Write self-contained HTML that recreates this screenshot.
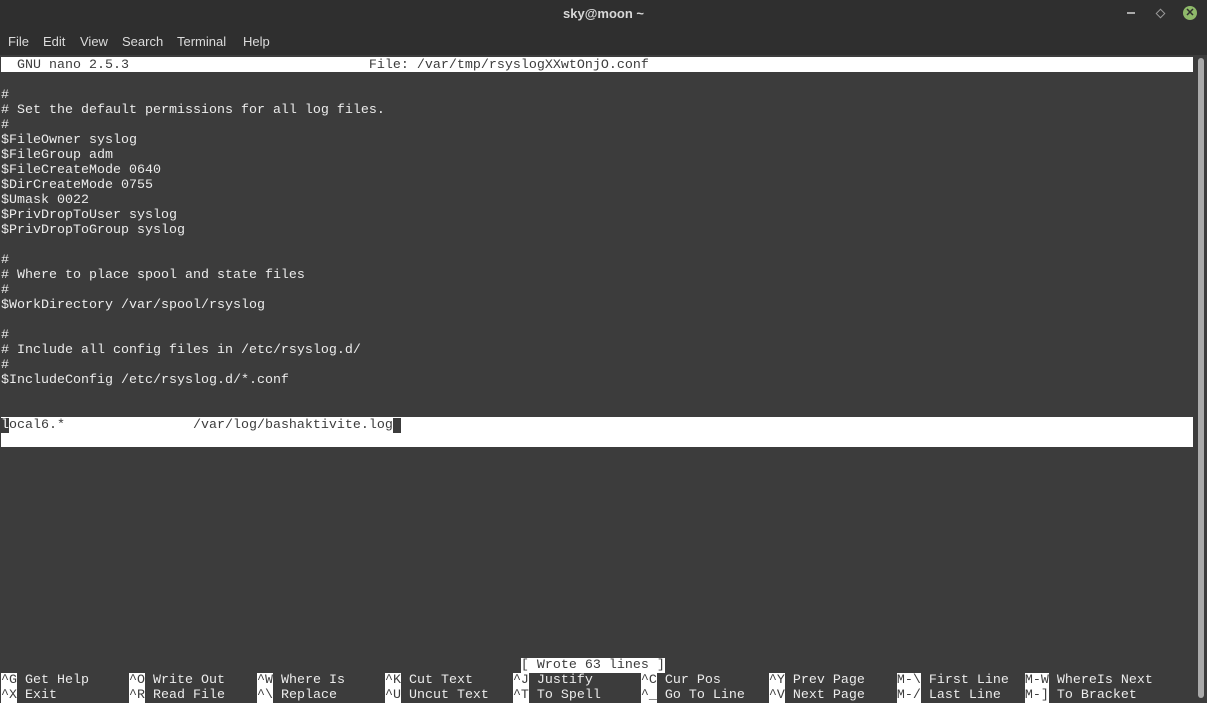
<!DOCTYPE html><html><head><meta charset="utf-8"><style>
*{margin:0;padding:0}
body{width:1207px;height:703px;background:#2f2f2f;overflow:hidden;position:relative;font-family:"Liberation Sans",sans-serif}
#title{position:absolute;top:0;left:0;width:1207px;height:30px;line-height:28px;text-align:center;color:#d8d8d8;font-weight:bold;font-size:13px}
#menu{position:absolute;top:30px;left:0;height:25px;font-size:13px;color:#dcdcdc}
#menu span{position:absolute;top:4px;white-space:nowrap}
#term{position:absolute;top:55px;left:0;width:1207px;height:648px;background:#3c3c3c}
pre{position:absolute;top:3px;left:1px;font-family:"Liberation Mono",monospace;font-size:13.33px;line-height:15px;color:#ececec;white-space:pre}
.i{background:#fff;color:#3c3c3c}
.h{color:#3c3c3c}
.c{background:#3c3c3c;color:#fff}
#hdr{position:absolute;top:2px;left:1px;width:1192px;height:15px;background:#fff}
#hl{position:absolute;top:362px;left:1px;width:1192px;height:30px;background:#fff}
#sb{position:absolute;top:3px;left:1198px;width:6px;height:640px;background:#aaa;border-radius:3px}
</style></head><body>
<div id="title">sky@moon ~</div>
<div style="position:absolute;left:1127px;top:12px;width:8px;height:2px;background:#aaa"></div>
<div style="position:absolute;left:1157px;top:10px;width:5px;height:5px;border:1px solid #999;transform:rotate(45deg)"></div>
<div style="position:absolute;left:1183px;top:6px;width:14px;height:14px;border-radius:7px;background:#8fba6a;color:#2f2f2f;font-size:11px;line-height:14px;text-align:center;font-weight:bold">✕</div>
<div id="menu"><span style="left:8px">File</span><span style="left:43px">Edit</span><span style="left:80px">View</span><span style="left:122px">Search</span><span style="left:177px">Terminal</span><span style="left:243px">Help</span></div>
<div id="term"><div id="hdr"></div><div id="hl"></div><div id="sb"></div>
<pre><span class="h">  GNU nano 2.5.3                              File: /var/tmp/rsyslogXXwtOnjO.conf</span>

#
# Set the default permissions for all log files.
#
$FileOwner syslog
$FileGroup adm
$FileCreateMode 0640
$DirCreateMode 0755
$Umask 0022
$PrivDropToUser syslog
$PrivDropToGroup syslog

#
# Where to place spool and state files
#
$WorkDirectory /var/spool/rsyslog

#
# Include all config files in /etc/rsyslog.d/
#
$IncludeConfig /etc/rsyslog.d/*.conf


<span class="c">l</span><span class="i">ocal6.*                /var/log/bashaktivite.log</span><span class="c"> </span>















                                                                 <span class="i">[ Wrote 63 lines ]</span>
<span class="i">^G</span> Get Help     <span class="i">^O</span> Write Out    <span class="i">^W</span> Where Is     <span class="i">^K</span> Cut Text     <span class="i">^J</span> Justify      <span class="i">^C</span> Cur Pos      <span class="i">^Y</span> Prev Page    <span class="i">M-\</span> First Line  <span class="i">M-W</span> WhereIs Next
<span class="i">^X</span> Exit         <span class="i">^R</span> Read File    <span class="i">^\</span> Replace      <span class="i">^U</span> Uncut Text   <span class="i">^T</span> To Spell     <span class="i">^_</span> Go To Line   <span class="i">^V</span> Next Page    <span class="i">M-/</span> Last Line   <span class="i">M-]</span> To Bracket</pre>
</div>
</body></html>
